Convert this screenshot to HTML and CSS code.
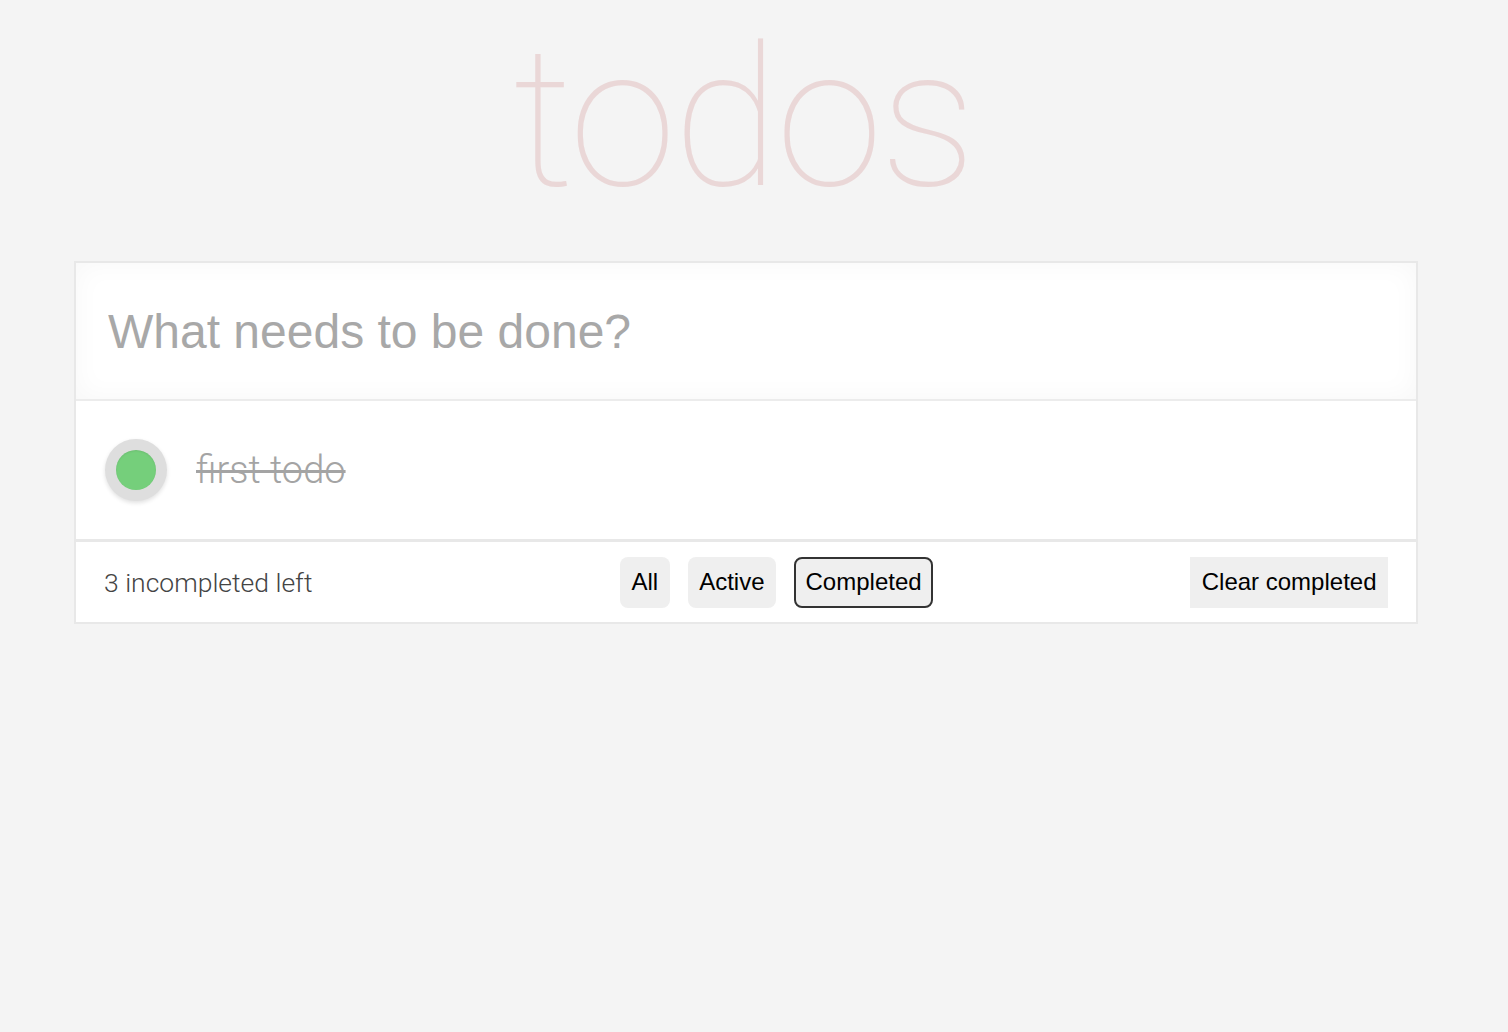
FILE: index.html
```html
<!DOCTYPE html>
<html>
<head>
<meta charset="utf-8">
<link rel="stylesheet" href="styles.css">
</head>
<body>
<h1 class="title">todos</h1>
<section class="app">
  <div class="new-todo">
    <input class="new-input" type="text" placeholder="What needs to be done?">
  </div>
  <ul class="list">
    <li class="item">
      <span class="check"><span class="check-dot"></span></span>
      <span class="item-text done">first todo</span>
    </li>
  </ul>
  <footer class="footer">
    <span class="count">3 incompleted left</span>
    <div class="filters">
      <button class="filter">All</button>
      <button class="filter">Active</button>
      <button class="filter selected">Completed</button>
    </div>
    <button class="clear">Clear completed</button>
  </footer>
</section>
</body>
</html>
```
FILE: styles.css
```css
html, body {
  margin: 0;
  padding: 0;
  background: #f4f4f4;
}
body {
  font-family: "Liberation Sans", Arial, sans-serif;
}
.title {
  margin: 0;
  height: 261px;
  box-sizing: border-box;
  padding-top: 19px;
  text-align: center;
  font-family: Roboto, "Liberation Sans", sans-serif;
  font-weight: 100;
  font-size: 194px;
  line-height: 200px;
  color: #ead7d7;
  letter-spacing: -3px;
  padding-right: 22px;
}
.app {
  margin-left: 74px;
  width: 1344px;
  box-sizing: border-box;
  border: 2px solid #e8e8e8;
  background: #fff;
}
.new-todo {
  height: 136px;
  border-bottom: 2px solid #ececec;
  box-shadow: inset 0 0 28px rgba(0,0,0,0.035);
  display: flex;
  align-items: center;
}
.new-input {
  border: none;
  outline: none;
  background: transparent;
  width: 100%;
  padding: 0 0 0 32px;
  font-family: "Liberation Sans", Arial, sans-serif;
  font-size: 48px;
  color: #555;
}
.new-input::placeholder {
  color: #a8a8a8;
}
.list {
  list-style: none;
  margin: 0;
  padding: 0;
}
.item {
  height: 138px;
  border-bottom: 3px solid #e8e8e8;
  display: flex;
  align-items: center;
  padding-left: 29px;
}
.check {
  width: 62px;
  height: 62px;
  border-radius: 50%;
  background: #dedede;
  box-shadow: 0 2px 4px rgba(0,0,0,0.12);
  display: flex;
  align-items: center;
  justify-content: center;
}
.check-dot {
  width: 40px;
  height: 40px;
  border-radius: 50%;
  background: #75cf7b;
  box-shadow: inset 0 1px 2px rgba(0,0,0,0.08);
}
.item-text {
  margin-left: 29px;
  font-family: Roboto, "Liberation Sans", sans-serif;
  font-weight: 300;
  font-size: 38px;
  color: #a4a4a4;
}
.done {
  text-decoration: line-through;
  text-decoration-thickness: 3px;
}
.footer {
  height: 80px;
  display: flex;
  align-items: center;
  padding: 0 28px;
}
.count {
  flex: 0 0 516px;
  font-family: Roboto, "Liberation Sans", sans-serif;
  font-weight: 300;
  font-size: 26.5px;
  color: #444;
}
.filters {
  display: flex;
  gap: 18px;
}
.filter, .clear {
  font-family: "Liberation Sans", Arial, sans-serif;
  font-size: 24px;
  color: #000;
  background: #efefef;
  height: 51px;
  box-sizing: border-box;
  border: 2px solid transparent;
  border-radius: 8px;
  padding: 0 9.5px;
  cursor: pointer;
}
.filter.selected {
  border-color: #333;
}
.clear {
  margin-left: auto;
  border-radius: 0;
  padding: 0 11.5px;
  border: none;
}
```
